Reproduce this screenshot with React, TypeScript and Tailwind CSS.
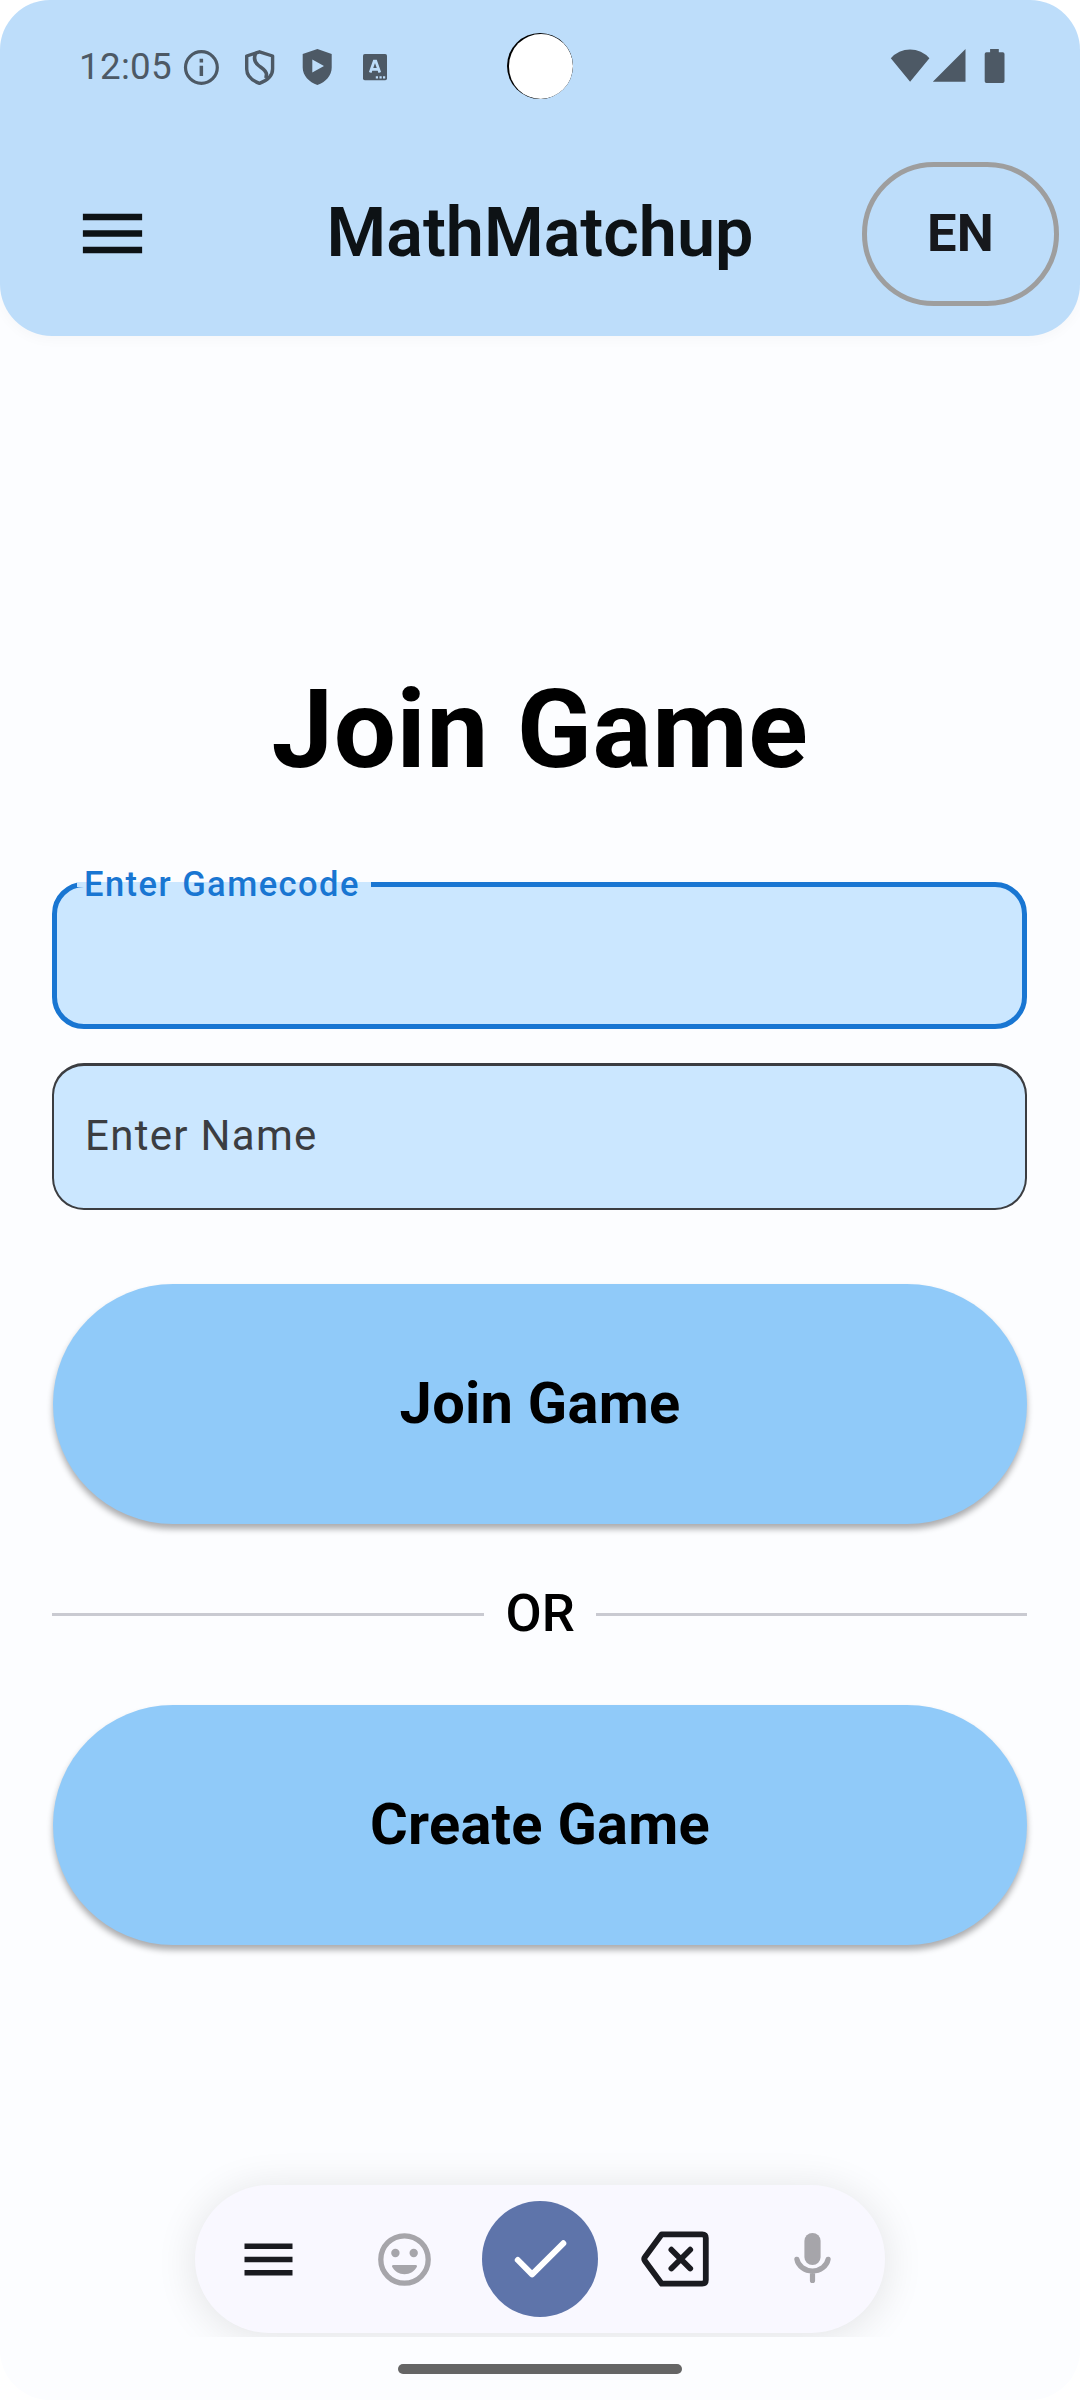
import type { ReactNode } from "react";

function StatusBar() {
  return (
    <div className="flex h-[130px] items-start justify-between pr-[75px] pl-[79px] text-[#4d5965]">
      <div className="flex pt-[47px]">
        <span className="-mt-[2px] w-[101px] text-[36.75px] leading-[44px] tracking-[0.3px]">12:05</span>
        <svg className="h-[40px] w-[230px]" viewBox="180 47 230 40">
          <circle cx="201.4" cy="67.5" r="15.9" fill="none" stroke="currentColor" strokeWidth="3.2" />
          <path d="M199.6 58.8h3.5v3.6h-3.5zM199.6 65.8h3.5V76h-3.5z" fill="currentColor" />
          <path
            d="M259.5 51.8 272.6 56v13c0 6.500-5.400 11.500-13.100 14.300C251.800 80.500 246.700 75.500 246.700 69V56Z"
            fill="none"
            stroke="currentColor"
            strokeWidth="3.4"
            strokeLinejoin="round"
          />
          <path
            d="M255.500 53.500c-2 5-1 8.500 2.500 11.500s8 5 8.500 9l-.500 4"
            fill="none"
            stroke="currentColor"
            strokeWidth="3.6"
          />
          <path
            fillRule="evenodd"
            d="M317.400 49 331.700 54v13.500c0 8-6 14.500-14.300 17.500C309 82 302.700 75.500 302.700 67.500V54ZM312.300 59.500v13L324 66Z"
            fill="currentColor"
          />
          <rect x="363" y="54" width="24" height="26.300" rx="1.800" fill="currentColor" />
          <path d="m370.200 72.500 4-11.300h1.600l4 11.300M371.700 69.300h6.600" fill="none" stroke="#bdddfa" strokeWidth="2.700" />
          <path d="M375.800 76.200h2.200v2.200h-2.200zM379.500 76.200h2.200v2.200h-2.200zM383 76.200h2.200v2.200H383z" fill="#bdddfa" />
        </svg>
      </div>
      <svg className="mt-[49px] h-[34px] w-[115px]" viewBox="890.500 49 115 34" fill="currentColor">
        <path d="M891.300 58.300a25.500 25.500 0 0 1 38.600 0L910.600 81.700ZM966 49v32.700h-32.700Z" />
        <path d="M990.600 49h8.700v3.300h3.900a1.800 1.800 0 0 1 1.800 1.800v27.100a1.800 1.800 0 0 1-1.800 1.800h-16.200a1.800 1.800 0 0 1-1.800-1.800V54.100a1.800 1.800 0 0 1 1.800-1.800h3.600Z" />
      </svg>
    </div>
  );
}

function Header() {
  return (
    <header className="relative h-[336px] rounded-b-[52px] bg-[#bdddfa] shadow-[0_3px_14px_rgba(0,0,0,0.03)]">
      <StatusBar />
      <div className="absolute top-[33px] left-[507px] size-[66px] overflow-hidden rounded-full bg-black">
        <div className="mt-px ml-[1.500px] size-[64.500px] rounded-full bg-white" />
      </div>
      <div className="grid h-[206px] grid-cols-[1fr_auto_1fr] items-start pr-[21px] pl-[73px] text-[#0d1215]">
        <button className="mt-[64px] size-[79px]" aria-label="Menu">
          <svg viewBox="0 0 24 24" className="size-full" fill="currentColor">
            <path d="M3 18h18v-2H3zm0-5h18v-2H3zm0-7v2h18V6z" />
          </svg>
        </button>
        <h1 className="mt-[63px] mr-[52px] text-[68.250px] leading-[80px] font-semibold">MathMatchup</h1>
        <button className="mt-[32px] flex h-[144px] w-[197px] items-center justify-center justify-self-end rounded-full border-[5px] border-[#9e9e9e] pb-[1px] text-[52.500px] font-bold tracking-[0.3px] text-[#17181c]">
          EN
        </button>
      </div>
    </header>
  );
}

function PillButton({ children }: { children: ReactNode }) {
  return (
    <button className="flex h-[240px] w-full items-center justify-center rounded-full bg-[#90caf9] pb-[1px] text-[57.750px] font-bold tracking-[0.270px] text-black shadow-[0_5px_6px_rgba(0,0,0,0.32)]">
      {children}
    </button>
  );
}

function JoinForm() {
  return (
    <main className="flex flex-col pr-[53px] pl-[52px]">
      <h2 className="mt-[329px] flex h-[130px] items-center justify-center pl-[1px] text-[110.250px] font-bold tracking-[0.600px] text-black">
        Join Game
      </h2>
      <div className="relative mt-[87px] h-[147px] rounded-[32px] border-[5px] border-[#1976d2] bg-[#cbe7ff]">
        <div className="absolute -top-[5px] left-[20px] h-[5px] w-[294px] bg-[#cbe7ff]" />
        <label className="absolute -top-[25px] left-[27px] text-[34.500px] leading-[44px] font-medium tracking-[1.450px] whitespace-nowrap text-[#1976d2]">
          Enter Gamecode
        </label>
      </div>
      <div className="mt-[34px] flex h-[147px] items-center rounded-[32px] border-2 border-t-[3px] border-[#3b3d41] bg-[#cbe7ff] pb-[4px] pl-[31px] text-[42px] tracking-[1.300px] text-[#3b3d41]">
        Enter Name
      </div>
      <div className="mt-[74px] pl-px">
        <PillButton>Join Game</PillButton>
      </div>
      <div className="flex h-[181px] items-center gap-[22px] text-[52.500px] font-medium text-black">
        <div className="h-[3px] flex-1 bg-[#c9cad1]" />
        <span className="w-[68px] pb-[3px] text-center">OR</span>
        <div className="h-[3px] flex-1 bg-[#c9cad1]" />
      </div>
      <div className="pl-px">
        <PillButton>Create Game</PillButton>
      </div>
    </main>
  );
}

function InputToolbar() {
  return (
    <div className="mt-auto flex h-[257px] flex-none items-end justify-center overflow-hidden pb-[4px]">
      <div className="flex h-[148px] w-[690px] items-center rounded-full bg-[#f9f8ff] shadow-[0_4px_42px_rgba(0,0,0,0.110)]">
        <svg viewBox="195 2185 690 148" className="h-[148px] w-[690px]" fill="none">
          <path d="M244.500 2243.500h48v5.600h-48zM244.500 2256.700h48v5.600h-48zM244.500 2270h48v5.600h-48z" fill="#1a1b20" />
          <g fill="#a6a5aa">
            <circle cx="404.500" cy="2259.500" r="23.700" fill="none" stroke="#a6a5aa" strokeWidth="5.300" />
            <circle cx="395.400" cy="2253" r="4.200" />
            <circle cx="413.700" cy="2253" r="4.200" />
            <path d="M393.400 2265h22.200q2 0 1.300 1.800c-2.200 4.500-7 7.400-12.400 7.400s-10.200-2.900-12.400-7.400q-.700-1.800 1.300-1.800Z" />
          </g>
          <circle cx="540" cy="2259" r="58" fill="#5e74aa" />
          <path d="m517.800 2260 14.300 14.300 31.200-31" stroke="#fff" strokeWidth="6" strokeLinecap="round" strokeLinejoin="round" />
          <path
            d="M661.700 2234.300h40.500q3.600 0 3.600 3.600v42.200q0 3.600-3.600 3.600h-40.500L645 2261q-1.500-2 0-4Z"
            stroke="#1a1b20"
            strokeWidth="5.800"
            strokeLinejoin="round"
          />
          <path d="m671.400 2249.700 18.800 18.800m0-18.800-18.800 18.800" stroke="#1a1b20" strokeWidth="5.800" strokeLinecap="round" />
          <rect x="804.400" y="2233" width="16.200" height="32" rx="8.100" fill="#a6a5aa" />
          <path
            d="M796.900 2259.300a15.800 13.900 0 0 0 31.200 0M812.500 2273v7.500"
            stroke="#a6a5aa"
            strokeWidth="5.200"
            strokeLinecap="round"
          />
        </svg>
      </div>
    </div>
  );
}

export default function App() {
  return (
    <div className="h-[2400px] w-[1080px] bg-white font-[Roboto,sans-serif]">
      <div className="flex h-full flex-col overflow-hidden rounded-[50px] bg-[#fcfdff]">
        <Header />
        <JoinForm />
        <InputToolbar />
        <div className="flex h-[63px] flex-none justify-center pt-[27px]">
          <div className="h-[10px] w-[284px] rounded-full bg-[#656565]" />
        </div>
      </div>
    </div>
  );
}
